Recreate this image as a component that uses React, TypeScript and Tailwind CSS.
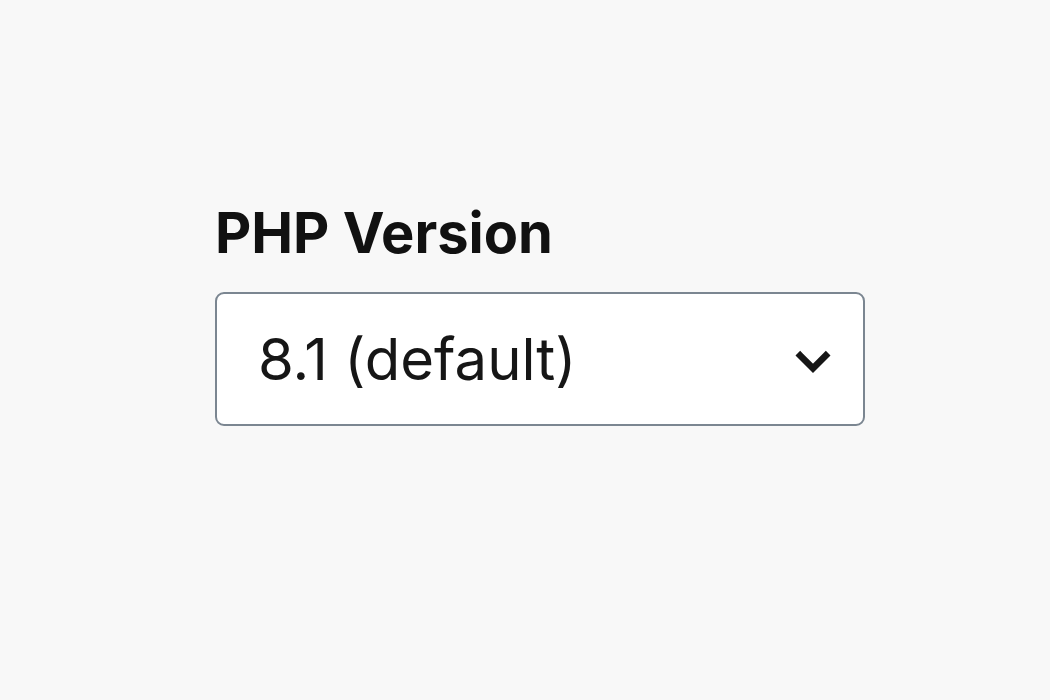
export default function App() {
  return (
    <div
      className="w-[1050px] h-[700px] bg-[#f8f8f8] flex flex-col pl-[215px] pt-[200px]"
      style={{ fontFamily: 'Inter, "Noto Sans", sans-serif' }}
    >
      <label className="text-[56px] leading-[66px] font-bold text-[#111111]">
        PHP Version
      </label>
      <div className="mt-[26px] w-[650px] h-[134px] bg-white border-2 border-[#7b8691] rounded-[9px] flex items-center justify-between pl-[41px] pr-[28px]">
        <span className="text-[58px] leading-none text-[#161616] font-normal">8.1 (default)</span>
        <svg className="mt-[4px]" width="44" height="44" viewBox="0 0 24 24" fill="none" stroke="#161616" strokeWidth="3.6" strokeLinecap="square">
          <path d="M5 9l7 7 7-7" />
        </svg>
      </div>
    </div>
  )
}
